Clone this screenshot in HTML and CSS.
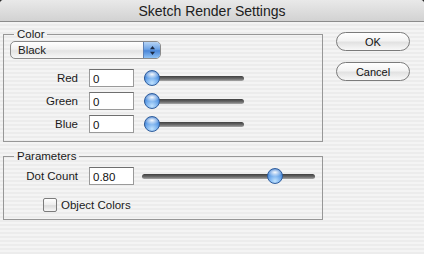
FILE: index.html
```html
<!DOCTYPE html>
<html lang="en">
<head>
    <meta charset="UTF-8">
    <meta name="viewport" content="width=device-width, initial-scale=1.0">
    <title>Sketch Render Settings</title>
    <link rel="stylesheet" href="styles.css">
</head>
<body>

    <div class="window">
        <div class="titlebar">Sketch Render Settings</div>

        <div class="content">
            <div class="panels">
                <fieldset class="group color-group">
                    <legend>Color</legend>
                    <div class="popup">
                        <span class="popup-text">Black</span>
                        <span class="stepper">
                            <svg width="7" height="11" viewBox="0 0 7 11">
                                <path d="M3.5 1 L6 4.2 L1 4.2 Z" fill="#1b2a44"/>
                                <path d="M3.5 10 L6 6.8 L1 6.8 Z" fill="#1b2a44"/>
                            </svg>
                        </span>
                    </div>

                    <div class="row">
                        <span class="row-label">Red</span>
                        <input class="field" type="text" value="0">
                        <div class="slider"><span class="thumb" style="left: 0px"></span></div>
                    </div>
                    <div class="row">
                        <span class="row-label">Green</span>
                        <input class="field" type="text" value="0">
                        <div class="slider"><span class="thumb" style="left: 0px"></span></div>
                    </div>
                    <div class="row">
                        <span class="row-label">Blue</span>
                        <input class="field" type="text" value="0">
                        <div class="slider"><span class="thumb" style="left: 0px"></span></div>
                    </div>
                </fieldset>

                <fieldset class="group params-group">
                    <legend>Parameters</legend>
                    <div class="row">
                        <span class="row-label">Dot Count</span>
                        <input class="field" type="text" value="0.80">
                        <div class="slider slider-wide"><span class="thumb" style="left: 125px"></span></div>
                    </div>
                    <label class="check">
                        <span class="check-box"></span>
                        <span>Object Colors</span>
                    </label>
                </fieldset>
            </div>

            <div class="buttons">
                <button class="btn">OK</button>
                <button class="btn">Cancel</button>
            </div>
        </div>
    </div>

</body>
</html>
```

FILE: styles.css
```css
html {
    background: #2a2a2a;
}
body {
    margin: 0;
    font-family: "Liberation Sans", Arial, sans-serif;
    font-size: 11px;
    color: #1a1a1a;
}

.window {
    width: 424px;
    height: 254px;
    border-radius: 4px 4px 0 0;
    overflow: hidden;
    background: repeating-linear-gradient(#ececec 0 2px, #f4f4f4 2px 4px);
}

.titlebar {
    height: 21px;
    line-height: 22px;
    text-align: center;
    font-size: 14px;
    color: #202020;
    background: linear-gradient(#e9e9e9, #d2d2d2);
    border-bottom: 1px solid #8c8c8c;
}

.content {
    display: flex;
    padding: 5px 0 0 3px;
}

.panels {
    width: 320px;
    display: flex;
    flex-direction: column;
    gap: 7px;
}

/* caja agrupada con titulo en el borde */
.group {
    margin: 0;
    border: 1px solid #979797;
    padding: 0 6px 8px 6px;
    min-width: 0;
}
.group legend {
    margin-left: 4px;
    padding: 0 3px;
    line-height: 14px;
    font-size: 11.5px;
    color: #1a1a1a;
}

.popup {
    display: flex;
    align-items: center;
    width: 149px;
    height: 16px;
    border: 1px solid #8a8a8a;
    border-radius: 5px;
    background: linear-gradient(#ffffff, #f1f1f1 45%, #e3e3e3 55%, #f7f7f7);
    overflow: hidden;
    margin-bottom: 10px;
}
.popup-text {
    flex: 1;
    padding-left: 7px;
    font-size: 11.5px;
}
.stepper {
    width: 16px;
    height: 16px;
    display: flex;
    align-items: center;
    justify-content: center;
    border-left: 1px solid #5d80b5;
    background: linear-gradient(#b6d4f6, #6ea4e6 45%, #4a86d8 55%, #8fc2f5);
}

.row {
    display: flex;
    align-items: center;
    height: 18px;
    margin-bottom: 5px;
    font-size: 11.5px;
}
.row:last-child {
    margin-bottom: 0;
}
.row-label {
    width: 68px;
    text-align: right;
    margin-right: 11px;
}

.field {
    width: 45px;
    height: 18px;
    box-sizing: border-box;
    border: 1px solid #9a9a9a;
    border-top-color: #6f6f6f;
    padding: 1px 3px 0;
    font-family: "Liberation Sans", Arial, sans-serif;
    font-size: 11.5px;
    color: #111;
    background: #fff;
    outline: none;
}

.slider {
    position: relative;
    width: 100px;
    height: 16px;
    margin-left: 10px;
}
.slider::before {
    content: '';
    position: absolute;
    left: 0;
    right: 0;
    top: 6px;
    height: 5px;
    border-radius: 3px;
    background: linear-gradient(#3f3f3f, #6e6e6e 60%, #a9a9a9);
}
.slider-wide {
    width: 173px;
    margin-left: 8px;
}
.thumb {
    position: absolute;
    top: 0;
    width: 16px;
    height: 16px;
    box-sizing: border-box;
    border-radius: 50%;
    border: 1px solid #2f5e9e;
    background:
        radial-gradient(ellipse 55% 32% at 50% 24%, rgba(255,255,255,0.95), rgba(255,255,255,0)),
        radial-gradient(circle at 50% 85%, #bfe2ff, #5d9ce6 55%, #2b66bd);
}

.params-group {
    padding-top: 4px;
    padding-bottom: 7px;
}
.params-group .row {
    margin-bottom: 13px;
}

.check {
    display: flex;
    align-items: center;
    gap: 4px;
    height: 14px;
    margin-left: 33px;
    font-size: 11.5px;
}
.check-box {
    width: 14px;
    height: 14px;
    box-sizing: border-box;
    border: 1px solid #7c7c7c;
    border-radius: 2px;
    background: linear-gradient(#ffffff, #ededed 50%, #dcdcdc 55%, #f6f6f6);
}

.buttons {
    display: flex;
    flex-direction: column;
    gap: 11px;
    margin: 5px 0 0 13px;
}
.btn {
    width: 74px;
    height: 19px;
    border: 1px solid #7b7b7b;
    border-radius: 10px;
    padding: 0;
    font-family: "Liberation Sans", Arial, sans-serif;
    font-size: 11px;
    color: #111;
    background: linear-gradient(#ffffff, #f3f3f3 45%, #e2e2e2 55%, #f8f8f8);
    cursor: pointer;
}
```
